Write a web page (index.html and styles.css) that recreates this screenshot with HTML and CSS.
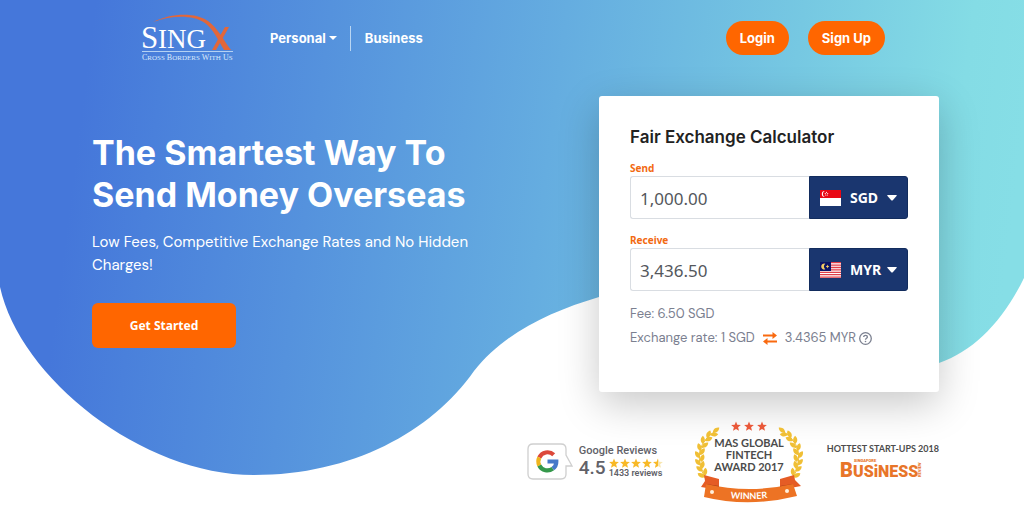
FILE: index.html
```html
<!DOCTYPE html>
<html lang="en">
<head>
<meta charset="utf-8">
<meta name="viewport" content="width=device-width, initial-scale=1">
<title>SingX</title>
<link rel="stylesheet" href="styles.css">
</head>
<body>
<div class="page">
  <svg class="backdrop" viewBox="0 0 1024 509" preserveAspectRatio="none" aria-hidden="true">
    <defs>
      <linearGradient id="sky" gradientUnits="userSpaceOnUse" x1="70" y1="200" x2="1000" y2="320">
        <stop offset="0" stop-color="#4577da"/>
        <stop offset="0.08" stop-color="#4a80db"/>
        <stop offset="0.25" stop-color="#5592dd"/>
        <stop offset="0.5" stop-color="#65ade0"/>
        <stop offset="0.75" stop-color="#76c8e2"/>
        <stop offset="0.93" stop-color="#84dce5"/>
        <stop offset="1" stop-color="#86dee6"/>
      </linearGradient>
    </defs>
    <path fill="url(#sky)" d="M0 0H1024V278C1003 321 974 351 939 363C800 372 700 296 599 297C549 312 504 333 474 371C431 432 352 475 254 475C142 475 20 378 0 287Z"/>
  </svg>

  <header class="header">
    <a class="logo" href="#" aria-label="SingX home">
      <svg width="94" height="52" viewBox="0 0 94 52">
        <path fill="#e2673a" d="M12 10C30 1 54 0 67 9C77 16 83 29 90 38H83C77 28 73 18 64 11C52 3 32 3 12 10Z"/>
        <path fill="#e2673a" d="M84 15H88L75 38H71Z"/>
        <g fill="#fff" class="logo-name"><text x="0" y="36" font-size="31">S</text><text x="17" y="36" font-size="27">ING</text></g>
        <path stroke="#b4d1f3" d="M1 39.500H92"/>
        <text class="logo-name" x="1" y="48" fill="#dbe9fb" font-size="8">C<tspan font-size="7">ROSS</tspan> B<tspan font-size="7">ORDERS</tspan> W<tspan font-size="7">ITH</tspan> U<tspan font-size="7">S</tspan></text>
      </svg>
    </a>
    <nav class="nav">
      <a class="nav-link" href="#">Personal <span class="caret"></span></a>
      <a class="nav-link" href="#">Business</a>
    </nav>
    <div class="account">
      <button class="pill" type="button">Login</button>
      <button class="pill" type="button">Sign Up</button>
    </div>
  </header>

  <main class="hero">
    <section class="intro">
      <h1>The Smartest Way To Send Money Overseas</h1>
      <p>Low Fees, Competitive Exchange Rates and No Hidden Charges!</p>
      <button class="start" type="button">Get Started</button>
    </section>

    <form class="card">
      <h2>Fair Exchange Calculator</h2>
      <label for="send">Send</label>
      <div class="amount">
        <input id="send" type="text" value="1,000.00">
        <div class="currency">
          <svg class="flag" width="21" height="16" viewBox="0 0 21 16" aria-hidden="true"><path fill="#fff" d="M0 0H21V16H0Z"/><path fill="#e90814" d="M0 0H21V8H0Z"/><path fill="#fff" d="M4.800 1A3 3 0 1 0 4.800 7A3.300 3.300 0 0 1 4.800 1Z"/><g fill="#fff"><circle cx="6.500" cy="2.300" r=".6"/><circle cx="5.300" cy="3.500" r=".6"/><circle cx="7.700" cy="3.500" r=".6"/><circle cx="5.700" cy="5" r=".6"/><circle cx="7.300" cy="5" r=".6"/></g></svg>
          <select aria-label="Send currency"><option>SGD</option><option>MYR</option></select>
          <svg class="arrow" width="10" height="6" viewBox="0 0 10 6" aria-hidden="true"><path fill="#fff" d="M1 0H9Q10.500 0 9.500 1L6 5Q5 6 4 5L.5 1Q-.5 0 1 0Z"/></svg>
        </div>
      </div>
      <label for="receive">Receive</label>
      <div class="amount">
        <input id="receive" type="text" value="3,436.50">
        <div class="currency">
          <svg class="flag" width="21" height="16" viewBox="0 0 21 16" aria-hidden="true"><path fill="#fff" d="M0 0H21V16H0Z"/><path stroke="#df3d48" stroke-width="1.300" d="M0 .7H21M0 3.100H21M0 5.500H21M0 7.900H21M0 10.300H21M0 12.700H21M0 15.100H21"/><path fill="#0b1467" d="M0 0H11V9H0Z"/><path fill="#f3cb63" d="M5.300 1.700A3 3 0 1 0 5.300 7.300A3.500 3.500 0 0 1 5.300 1.700Z"/><path fill="#f3cb63" d="M7.500 2.500L8 3.800L9.300 4.500L8 5.200L7.500 6.500L7 5.200L5.700 4.500L7 3.800Z"/></svg>
          <select aria-label="Receive currency"><option>MYR</option><option>SGD</option></select>
          <svg class="arrow" width="10" height="6" viewBox="0 0 10 6" aria-hidden="true"><path fill="#fff" d="M1 0H9Q10.500 0 9.500 1L6 5Q5 6 4 5L.5 1Q-.5 0 1 0Z"/></svg>
        </div>
      </div>
      <p class="detail">Fee: 6.50 SGD</p>
      <p class="detail rate">
        <span>Exchange rate: 1 SGD</span>
        <svg class="swap" width="14" height="13" viewBox="0 0 14 13" aria-hidden="true"><path fill="none" stroke="#f96a10" stroke-width="2" d="M0 3.500H11M3 9.500H14"/><path fill="#f96a10" d="M9.500 0L14 3.500L9.500 7ZM4.500 6L0 9.500L4.500 13Z"/></svg>
        <span>3.4365 MYR</span>
        <svg class="help" width="13" height="13" viewBox="0 0 13 13" role="img" aria-label="Help"><circle cx="6.500" cy="6.500" r="5.800" fill="none" stroke="#7b8090" stroke-width="1.300"/><path fill="none" stroke="#7b8090" stroke-width="1.300" d="M4.700 5.100C4.700 2.800 8.400 2.900 8.400 5C8.400 6.300 6.500 6.200 6.500 7.700"/><circle cx="6.500" cy="9.500" r=".8" fill="#7b8090"/></svg>
      </p>
    </form>
  </main>

  <section class="awards" aria-label="Reviews and awards">
    <div class="google">
      <svg width="46" height="38" viewBox="0 0 46 38" aria-hidden="true">
        <path fill="#fff" stroke="#cfcfcf" stroke-width="1.300" d="M6 1H34Q39 1 39 6V12L45 23H39V31Q39 36 34 36H6Q1 36 1 31V6Q1 1 6 1Z"/>
        <g fill="none" stroke-width="4.200"><path stroke="#dc493b" d="M12.300 14.500A9 9 0 0 1 26.700 11.800"/><path stroke="#efb51e" d="M12.300 14.500A9 9 0 0 0 12.300 22.500"/><path stroke="#35984b" d="M12.300 22.500A9 9 0 0 0 25.800 25.600"/><path stroke="#4679c9" d="M20.500 18.500H29.300Q29.400 23 25.800 25.600"/></g>
      </svg>
      <div class="review">
        <span class="review-title">Google Reviews</span>
        <div class="score">
          <strong>4.5</strong>
          <div class="score-detail">
            <svg width="54" height="11" viewBox="0 0 54 11" role="img" aria-label="4.5 stars">
              <defs><path id="star" d="M5 .5L6.300 3.800L9.900 4L7.100 6.300L8 9.800L5 7.900L2 9.800L2.900 6.300L.1 4L3.700 3.800Z"/></defs>
              <g fill="#f8b927"><use href="#star"/><use href="#star" x="11"/><use href="#star" x="22"/><use href="#star" x="33"/></g>
              <use href="#star" x="44" fill="#f8e6b0"/><path fill="#f8b927" d="M49 .5V7.900L46 9.800L46.900 6.300L44.100 4L47.700 3.800Z"/>
            </svg>
            <span class="review-count">1433 reviews</span>
          </div>
        </div>
      </div>
    </div>

    <svg class="mas" width="114" height="84" viewBox="0 0 114 84" role="img" aria-label="MAS Global Fintech Award 2017 winner">
      <defs>
        <path id="leaf" d="M0 0C-2-2-2-6 2-8C4-5 3-2 0 0Z"/>
        <path id="winner-line" d="M22 75.500Q57 83 92 75"/>
        <g id="branch" fill="#f0bf35">
          <path d="M25 10Q-3 27 13 58" fill="none" stroke="#f0bf35"/>
          <use href="#leaf" transform="translate(21 13) rotate(35)"/><use href="#leaf" transform="translate(15 18) rotate(10)"/><use href="#leaf" transform="translate(11 24) rotate(-15)"/><use href="#leaf" transform="translate(9 31) rotate(-35)"/><use href="#leaf" transform="translate(8 38) rotate(-50)"/><use href="#leaf" transform="translate(9 45) rotate(-60)"/><use href="#leaf" transform="translate(11 51) rotate(-70)"/><use href="#leaf" transform="translate(13 57) rotate(-78)"/>
          <use href="#leaf" transform="translate(18 15) rotate(70)"/><use href="#leaf" transform="translate(13 21) rotate(50)"/><use href="#leaf" transform="translate(10 28) rotate(35)"/><use href="#leaf" transform="translate(8 35) rotate(20)"/><use href="#leaf" transform="translate(9 42) rotate(5)"/><use href="#leaf" transform="translate(10 49) rotate(-5)"/><use href="#leaf" transform="translate(13 56) rotate(-10)"/>
        </g>
      </defs>
      <use href="#branch"/><use href="#branch" transform="matrix(-1 0 0 1 114 0)"/>
      <g fill="#e95839"><use href="#star" x="39" y="1"/><use href="#star" x="52" y="1"/><use href="#star" x="65" y="1"/></g>
      <g class="mas-name" fill="#4b4b4b" text-anchor="middle"><text x="57" y="27">MAS GLOBAL</text><text x="57" y="39">FINTECH</text><text x="57" y="51">AWARD 2017</text></g>
      <path fill="#e55c25" d="M12 55L27 59V70L9 67L13 61ZM102 55L88 59V70L109 66L103 60Z"/>
      <path fill="#a83b18" d="M14 64L27 66V70L14 67ZM101 64L88 66V70L101 67Z"/>
      <path fill="#ed7324" d="M14 64Q57 74 101 64L105 76Q57 88 12 77Z"/>
      <circle cx="20" cy="72" r="2" fill="#fff0dc"/><circle cx="95" cy="71" r="2" fill="#fff0dc"/>
      <text class="mas-winner" fill="#fff" text-anchor="middle"><textPath href="#winner-line" startOffset="50%">WINNER</textPath></text>
    </svg>

    <div class="startups">
      <span>HOTTEST START-UPS 2018</span>
      <svg width="86" height="26" viewBox="0 0 86 26" role="img" aria-label="Singapore Business Review">
        <g class="business" fill="#e87529"><text x="0" y="22" font-size="20">B</text><text x="13" y="22" font-size="16">USiNESS</text><text x="14" y="7" font-size="4">SINGAPORE</text><text x="-22" y="81" font-size="4" transform="rotate(-90)">REVIEW</text></g>
      </svg>
    </div>
  </section>
</div>
</body>
</html>
```
FILE: styles.css
```css
* { box-sizing: border-box; }
body { margin: 0; background: #fff; font-family: Inter, sans-serif; color: #222; }
button { border: 0; background: #f60; color: #fff; cursor: pointer; }
a { color: inherit; text-decoration: none; }
svg { display: block; flex: none; }
.page { position: relative; isolation: isolate; min-height: 100vh; padding: 0 85px 0 92px; display: flex; flex-direction: column; }
.backdrop { position: absolute; inset: 0; z-index: -1; width: 100%; height: 100%; }

.header { display: flex; align-items: center; height: 76px; padding: 0 54px 0 49px; color: #fff; }
.logo-name { font-family: "Liberation Serif", serif; }
.nav { display: flex; align-items: center; margin-left: 35px; font-size: 13px; font-weight: 700; }
.nav-link { line-height: 25px; }
.nav-link + .nav-link { margin-left: 13px; padding-left: 14px; border-left: 1px solid #b9d6f3; }
.caret { display: inline-block; vertical-align: 3px; border: 4px solid transparent; border-top-color: #fff; border-bottom: 0; }
.account { display: flex; gap: 19px; margin-left: auto; }
.pill { height: 34px; padding: 0 14px; border-radius: 17px; font: 700 13px Inter, sans-serif; }

.hero { display: grid; grid-template-columns: minmax(0, 1fr) 340px; gap: 100px; align-items: start; padding-top: 20px; }
.intro { padding-top: 36px; }
h1 { margin: 0; color: #fff; font-size: 34px; line-height: 42px; font-weight: 700; }
.intro p { margin: 15px 0 26px; color: #fff; font: 15px/23px "DM Sans", Inter, sans-serif; }
.start { width: 144px; height: 45px; border-radius: 6px; font: 700 12px "Noto Sans", sans-serif; }

.card { padding: 29px 31px 42px; border-radius: 3px; background: #fff; box-shadow: 0 12px 40px rgba(0, 0, 0, .22); }
h2 { margin: 0 0 11px; font-size: 17px; line-height: 24px; font-weight: 600; }
.card label { display: block; color: #f26a12; font: 700 10px/16px "Noto Sans", sans-serif; }
.amount { display: flex; height: 43px; margin-bottom: 13px; }
.amount input { flex: 1; min-width: 0; padding: 2px 9px 0; border: 1px solid #d9dde2; border-right: 0; border-radius: 3px 0 0 3px; background: #fff; color: #54575c; font: 17px "Noto Sans", sans-serif; }
.currency { display: flex; align-items: center; width: 99px; padding: 0 10px; border: 1px solid #122c5d; border-radius: 0 3px 3px 0; background: #1a366f; }
.currency select { flex: 1; min-width: 0; padding: 0 0 0 9px; border: 0; appearance: none; background: transparent; color: #fff; font: 700 14px "Noto Sans", sans-serif; }
.detail { display: flex; align-items: center; margin: 0; color: #7b8090; font: 13px/24px "DM Sans", Inter, sans-serif; }
.amount + .detail { margin-top: -2px; }
.swap { margin: 0 8px; }
.help { margin-left: 3px; }

.awards { display: flex; justify-content: flex-end; align-items: center; gap: 21px; margin-top: 28px; }
.google { display: flex; align-items: center; gap: 6px; }
.review { width: 92px; color: #616168; font-family: Roboto, sans-serif; }
.review-title { display: block; font-size: 11px; line-height: 12px; font-weight: 500; }
.score { display: flex; align-items: center; gap: 3px; }
.score strong { font-size: 19px; line-height: 22px; font-weight: 500; }
.review-count { display: block; font-size: 9px; line-height: 9px; font-weight: 600; white-space: nowrap; }
.mas-name { font: 700 11px Lato, sans-serif; }
.mas-winner { font: 700 9px Lato, sans-serif; }
.startups { display: flex; flex-direction: column; align-items: center; color: #4c4c4c; font: 700 9px/12px Lato, sans-serif; white-space: nowrap; }
.business { font-family: Roboto, sans-serif; font-weight: 900; }
```
